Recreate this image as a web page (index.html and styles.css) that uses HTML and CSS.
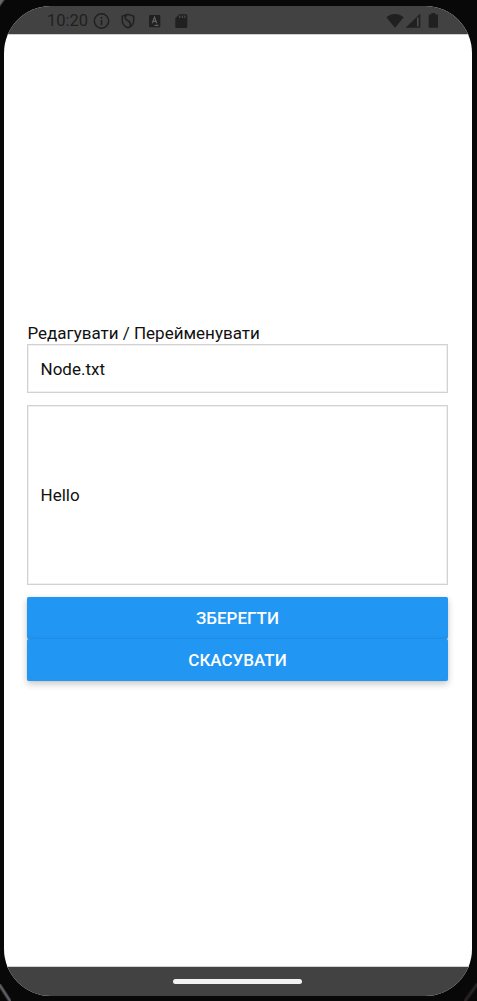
FILE: index.html
```
<!DOCTYPE html>
<html lang="uk">
<head>
<meta charset="utf-8">
<title>Редагувати / Перейменувати</title>
<link rel="stylesheet" href="styles.css">
</head>
<body>
<div class="phone">
  <div class="screen">
    <header class="status">
      <span class="clock">10:20</span>
      <svg class="notifications" width="96" height="18" viewBox="0 0 96 18">
        <circle cx="8.5" cy="9" r="7.2" fill="none" stroke="currentColor" stroke-width="1.5"/>
        <path d="M7.7 8h1.6v5H7.7zM7.7 5h1.6v1.7H7.7z" fill="currentColor"/>
        <path d="M35 2.200 29.300 4.200v4.500c0 3.200 2.400 5.800 5.700 7 3.300-1.200 5.700-3.800 5.700-7V4.200z" fill="none" stroke="currentColor" stroke-width="1.500"/>
        <path d="M33.500 3c-2 2.500-1.500 4 .8 5.200 2.900 1.600 4 3.300 2.600 6" fill="none" stroke="currentColor" stroke-width="1.600"/>
        <rect x="56" y="3" width="11.300" height="12.300" rx="1" fill="currentColor"/>
        <path d="m59.200 11.200 2.300-6 2.300 6M60.200 9.300h2.600M61.500 13.300h4" fill="none" stroke="#606060" stroke-width="1.200"/>
        <path d="M86.300 2.300H93a1.300 1.300 0 0 1 1.300 1.300v11.100A1.300 1.300 0 0 1 93 16H83.600a1.300 1.300 0 0 1-1.300-1.300V6.300z" fill="currentColor"/>
        <path d="M86.700 3.500v2.500M89.300 3.500v2.500M91.900 3.500v2.500" stroke="#555" stroke-width="1"/>
      </svg>
      <svg class="system" width="54" height="18" viewBox="0 0 54 18">
        <path d="M.3 5.300C5 .8 13 .8 17.700 5.300L9 15.800z" fill="currentColor"/>
        <path d="M19.500 15.800 34.300 1.500v14.300z" fill="currentColor"/>
        <path d="M31.800 5.500v9" stroke="#505050" stroke-width="1.500"/>
        <path d="M45.200 1h4v1.500h1.800c.6 0 1 .4 1 1v11.300c0 .6-.4 1-1 1h-7.300c-.6 0-1-.4-1-1V3.500c0-.6.4-1 1-1h1.500z" fill="currentColor"/>
      </svg>
    </header>
    <main class="editor">
      <label class="title">Редагувати / Перейменувати</label>
      <div class="field name">Node.txt</div>
      <div class="field content">Hello</div>
      <button class="button">ЗБЕРЕГТИ</button>
      <button class="button">СКАСУВАТИ</button>
    </main>
    <footer class="navigation"><span class="handle"></span></footer>
  </div>
</div>
</body>
</html>
```
FILE: styles.css
```
* { box-sizing: border-box; }
body {
  margin: 0;
  background: #080809;
  font-family: Roboto, "Liberation Sans", sans-serif;
}
.phone {
  height: 1001px;
  padding: 6px 5px 5px 4px;
  overflow: hidden;
  background:
    linear-gradient(to top right, #080809 32%, #606166 44%, #606166 48%, #080809 58%) 0 100% / 11px 17px no-repeat,
    linear-gradient(to top left, #080809 34%, #2c2726 46%, #080809 58%) 100% 100% / 13px 18px no-repeat,
    linear-gradient(to bottom right, #66676b 30%, #080809 55%) 0 0 / 5px 7px no-repeat,
    #080809;
}
.screen {
  display: flex;
  flex-direction: column;
  height: 990px;
  overflow: hidden;
  border-radius: 47px;
  background: #fff;
}
.status {
  display: flex;
  align-items: center;
  height: 28px;
  padding: 0 32px 0 43px;
  background: #424242;
  box-shadow: 0 1px #d0d0d0;
  color: #202020;
}
.clock { width: 42px; padding-top: 2px; font-size: 16.5px; line-height: 26px; }
.notifications { margin: 2px 0 0 4px; }
.system { margin: 1px 0 0 auto; }
.editor {
  display: flex;
  flex: 1;
  flex-direction: column;
  padding: 289px 24px 0 23px;
  color: #111;
  font-size: 17px;
}
.title { height: 21px; padding-left: .4px; line-height: 21px; white-space: nowrap; }
.field {
  display: flex;
  align-items: center;
  padding: 0 12.5px;
  border: 1px solid #d2d2d2;
  box-shadow: inset 0 0 0 1px #f0f0f0;
  margin-bottom: 12px;
}
.name { height: 49px; }
.content { height: 179.500px; }
.button {
  height: 42px;
  flex: none;
  padding: 1px 0 0;
  border: 0;
  border-radius: 2px;
  background: #2196f3;
  box-shadow: 0 3px 7px rgba(0, 0, 0, .22), 0 0 1px rgba(0, 0, 0, .2);
  color: #fff;
  font: 500 17px Roboto, "Liberation Sans", sans-serif;
}
.navigation {
  display: flex;
  align-items: center;
  justify-content: center;
  height: 29px;
  background: #424242;
  box-shadow: 0 -1px #d0d0d0;
}
.handle {
  width: 129px;
  height: 5px;
  margin-right: 1px;
  border-radius: 3px;
  background: #f2f2f2;
}
```
